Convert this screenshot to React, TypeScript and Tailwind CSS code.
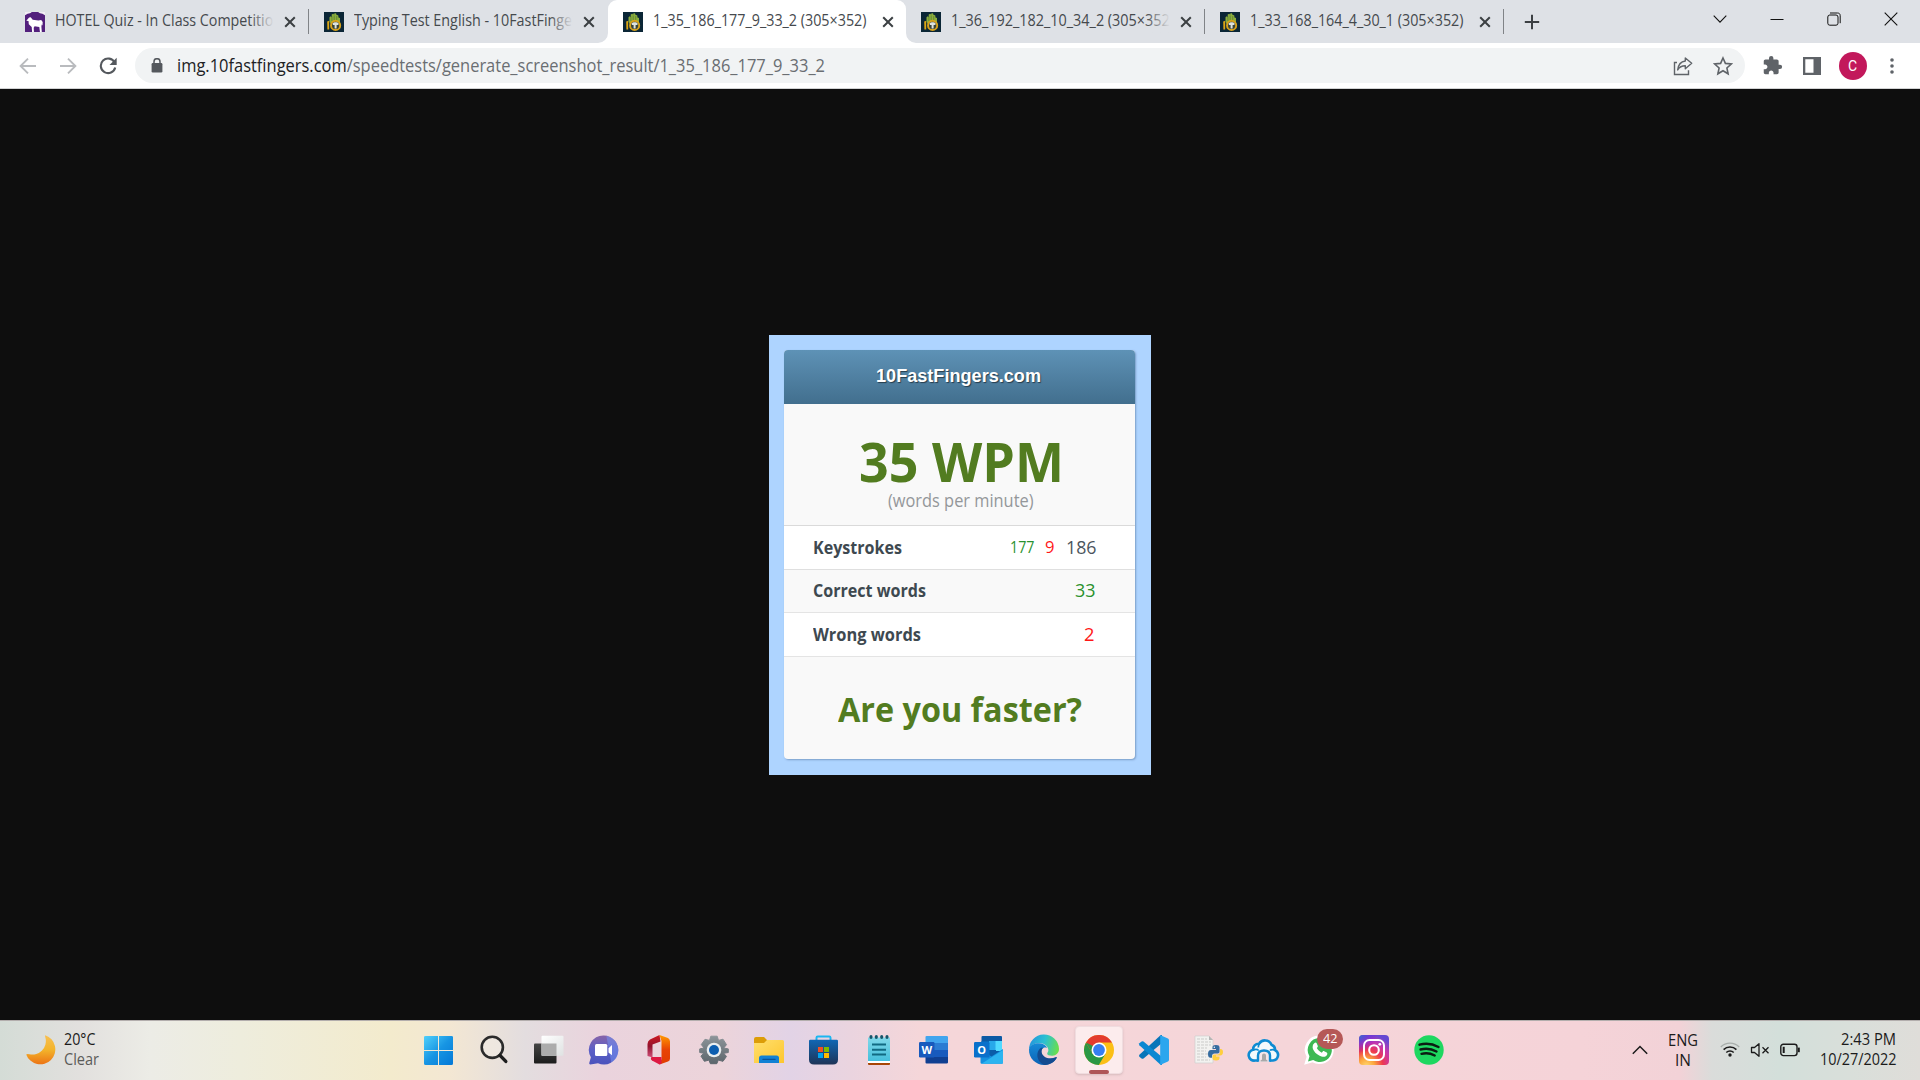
import React, { useLayoutEffect, useRef } from "react";

const UI = "font-['Open_Sans','Noto_Sans',sans-serif]";

/* One line of text squeezed or stretched horizontally to a fixed width. */
function Fit({ w, className = "", children }: { w: number; className?: string; children: React.ReactNode }) {
  const inner = useRef<HTMLSpanElement>(null);
  useLayoutEffect(() => {
    const el = inner.current;
    if (el && el.offsetWidth) el.style.transform = `scaleX(${w / el.getBoundingClientRect().width})`;
  }, []);
  return (
    <span className={`block shrink-0 whitespace-nowrap leading-none ${className}`} style={{ width: w }}>
      <span ref={inner} className="inline-block origin-left whitespace-pre">{children}</span>
    </span>
  );
}

function HandFavicon() {
  return (
    <svg viewBox="0 0 20 20" className="h-5 w-5 shrink-0">
      <rect width="20" height="20" fill="#0b2636" />
      <path d="M5.500 10V5.200l1.200-1 1 1V2.600l1.600-.8.900 1V1.500l1.800-.3.600 1.800 1.600.2.300 2.200 1.500.6V11l-2 1H7z" fill="#8bae3c" />
      <path d="M7.900 4.500v4.500M10.200 3.500V8M12.700 4V8.500" stroke="#4e7030" strokeWidth=".6" />
      <path d="M3.200 9.500 5.200 8.800v8.800H3.400z" fill="#dba514" />
      <circle cx="11.600" cy="13.400" r="4.600" fill="#3a4438" stroke="#d8a21b" strokeWidth="1.900" />
      <path d="M8.500 11.600c1.400-1.800 4.900-1.800 6.200 0l-.4 1.300h-1.700v3.600h-2v-3.600H9z" fill="#dfe3de" />
    </svg>
  );
}

function HorseFavicon() {
  return (
    <svg viewBox="0 0 20 20" className="h-5 w-5 shrink-0">
      <rect width="20" height="20" fill="#f3eef6" />
      <path d="M0 3.200 2.600 1.800C4.500 1.600 5.600.9 6.800 0h6.400c1.200.9 2.300 1.600 4.200 1.800L20 3.200V20H0z" fill="#53207d" />
      <path d="M1.300 8.800 4.100 5.600l1.600-.4 2 2.500 5.700.7 2.800-.4 1.500 2-.2 3.500-.8-1-.3 2.300.5 6.200h-1.800l-.8-6-4.700-.8-.9 1.500.3 5.400H7.200l-.5-6-2.900-2.800L3.500 9z" fill="#fff" />
    </svg>
  );
}

function TabClose() {
  return (
    <svg viewBox="0 0 12 12" className="h-3 w-3 shrink-0">
      <path d="M1.200 1.200l9.600 9.600M10.800 1.200 1.200 10.800" stroke="#3c4043" strokeWidth="2" />
    </svg>
  );
}

function Tab({ title, w, horse, active, line, fade }: { title: string; w: number; horse?: boolean; active?: boolean; line?: boolean; fade?: boolean }) {
  return (
    <div className={`relative flex h-[43px] w-[298.750px] shrink-0 items-center pl-[15px] ${active ? "rounded-t-[9px] bg-white" : ""}`}>
      {active && (
        <>
          <svg viewBox="0 0 10 10" className="absolute bottom-0 -left-[10px] h-[10px] w-[10px]"><path d="M10 0v10H0A10 10 0 0 0 10 0" fill="#fff" /></svg>
          <svg viewBox="0 0 10 10" className="absolute -right-[10px] bottom-0 h-[10px] w-[10px]"><path d="M0 0v10h10A10 10 0 0 1 0 0" fill="#fff" /></svg>
        </>
      )}
      {horse ? <HorseFavicon /> : <HandFavicon />}
      <div className="relative ml-[10px] h-[22px] w-[219px] shrink-0 overflow-hidden">
        <Fit w={w} className="mt-[2px] text-[15.500px] text-[#45494d]">{title}</Fit>
        {fade && <div className="absolute top-0 right-0 h-full w-6 bg-gradient-to-r from-[#dee1e600] to-[#dee1e6]" />}
      </div>
      <div className="ml-[10px] flex shrink-0"><TabClose /></div>
      {line && <div className="ml-[12px] h-[25px] w-px shrink-0 bg-[#808387]" />}
    </div>
  );
}

function TabStrip() {
  return (
    <div className="flex h-[43px] bg-[#dee1e6] pl-[10px]">
      <Tab horse title="HOTEL Quiz - In Class Competition" w={227} fade line />
      <Tab title="Typing Test English - 10FastFinger" w={224} fade />
      <Tab active title="1_35_186_177_9_33_2 (305×352)" w={213.500} />
      <Tab title="1_36_192_182_10_34_2 (305×352)" w={223} fade line />
      <Tab title="1_33_168_164_4_30_1 (305×352)" w={213.500} line />
      <div className="flex h-full flex-1 items-center">
        <svg viewBox="0 0 16 16" className="ml-[20.500px] h-4 w-4"><path d="M8 .8v14.400M.8 8h14.400" stroke="#3c4043" strokeWidth="2" /></svg>
        <div className="mr-[22px] mb-[6px] ml-auto flex items-center gap-[43px] text-[#111]">
          <svg viewBox="0 0 14 14" className="h-[14px] w-[14px]"><path d="M.7 3.700 7 10.200l6.300-6.500" fill="none" stroke="currentColor" strokeWidth="1.100" /></svg>
          <svg viewBox="0 0 14 14" className="h-[14px] w-[14px]"><path d="M.5 7.500h13" stroke="currentColor" /></svg>
          <svg viewBox="0 0 14 14" className="h-[14px] w-[14px]" fill="none" stroke="currentColor"><rect x=".8" y="3" width="10.200" height="10.200" rx="2" /><path d="M3 1h7.500c1.700 0 2.700 1 2.700 2.700v7.500" /></svg>
          <svg viewBox="0 0 14 14" className="h-[14px] w-[14px]"><path d="M.7.7l12.600 12.600M13.300.7.7 13.300" stroke="currentColor" strokeWidth="1.100" /></svg>
        </div>
      </div>
    </div>
  );
}

function Toolbar() {
  return (
    <div className="flex h-[46px] items-center border-b border-[#d2d3d4] bg-white pl-[19px]">
      <svg viewBox="0 0 18 18" className="h-[18px] w-[18px]"><path d="M17 9H2M9 1.600 1.600 9 9 16.400" fill="none" stroke="#b9bbbe" strokeWidth="1.900" /></svg>
      <svg viewBox="0 0 18 18" className="ml-[22px] h-[18px] w-[18px]"><path d="M1 9h15M9 1.600 16.400 9 9 16.400" fill="none" stroke="#b9bbbe" strokeWidth="1.900" /></svg>
      <svg viewBox="0 0 18 18" className="ml-[21.500px] h-[18px] w-[18px]"><path d="M15.600 5.500A7.300 7.300 0 1 0 16.200 10.500" fill="none" stroke="#54585d" strokeWidth="2.100" /><path d="M17.700.8v7.200h-7.200z" fill="#54585d" /></svg>
      <div className="ml-[18.500px] flex h-[35px] w-[1609.500px] items-center rounded-full bg-[#f1f3f4]">
        <svg viewBox="0 0 12 15" className="ml-[16px] h-[15px] w-3"><rect x=".6" y="5" width="10.800" height="9.400" rx="1.200" fill="#54585d" /><path d="M3 5.500V3.700a3 3 0 0 1 6 0v1.800" fill="none" stroke="#54585d" strokeWidth="1.500" /></svg>
        <Fit w={648} className="ml-[13.500px] text-[17.500px] text-[#6a6e72]"><span className="text-[#202124]">img.10fastfingers.com</span>/speedtests/generate_screenshot_result/1_35_186_177_9_33_2</Fit>
        <svg viewBox="0 0 20 20" className="ml-auto h-5 w-5" fill="none" stroke="#5f6368" strokeWidth="1.400"><path d="M4 6.500H1.500v12h14v-4.200" /><path d="M12.300 2l6.400 5.300-6.400 5.400V9.800c-3.500 0-6 1.400-7.600 4.100.5-4.500 3-8.300 7.600-8.900z" strokeLinejoin="round" /></svg>
        <svg viewBox="0 0 20 20" className="mr-[12px] ml-5 h-5 w-5"><path d="M10 2l2.400 5.400 5.900.6-4.400 4 1.200 5.800L10 14.800l-5.100 3L6.100 12 1.700 8l5.900-.6z" fill="none" stroke="#5f6368" strokeWidth="1.600" /></svg>
      </div>
      <svg viewBox="0 0 24 24" className="ml-[17px] h-[21px] w-[21px]"><path d="M20.500 11H19V7c0-1.100-.9-2-2-2h-4V3.500a2.500 2.500 0 0 0-5 0V5H4c-1.100 0-1.990.9-1.990 2v3.800H3.500c1.490 0 2.700 1.210 2.700 2.700s-1.210 2.700-2.700 2.700H2V20c0 1.100.9 2 2 2h3.800v-1.500c0-1.490 1.210-2.700 2.700-2.700 1.490 0 2.700 1.210 2.700 2.700V22H17c1.100 0 2-.9 2-2v-4h1.500a2.500 2.500 0 0 0 0-5z" fill="#5f6368" /></svg>
      <svg viewBox="0 0 18 18" className="ml-[20px] h-[18px] w-[18px]"><path d="M0 0h18v18H0zM2.300 2.300v13.400h8.200V2.300z" fill="#5f6368" fillRule="evenodd" /></svg>
      <div className="ml-[18px] flex h-7 w-7 items-center justify-center rounded-full bg-[#c2185b] font-['Roboto',sans-serif] text-[14px] leading-none text-white">C</div>
      <svg viewBox="0 0 4 16" className="ml-[23px] h-4 w-1" fill="#5f6368"><circle cx="2" cy="2" r="1.800" /><circle cx="2" cy="8" r="1.800" /><circle cx="2" cy="14" r="1.800" /></svg>
    </div>
  );
}

function ResultCard() {
  return (
    <div className={`flex h-[440px] w-[382px] flex-col bg-[#aed4ff] pt-[15px] pl-[15px] ${UI}`}>
      <div className="flex h-[409px] w-[351px] flex-col overflow-hidden rounded-[4px] bg-[#f9f9f9] shadow-[1px_1px_2px_rgba(60,90,130,0.45)]">
        <div className="h-[54px] bg-gradient-to-b from-[#5e92b6] to-[#426f8e] pt-[16.500px] pl-[92px]">
          <Fit w={165} className="font-['Liberation_Sans',sans-serif] text-[18.500px] font-bold text-white [text-shadow:1px_1px_1px_#263c4c]">10FastFingers.com</Fit>
        </div>
        <div className="h-[122px] border-b border-[#dadada] pt-[30px]">
          <Fit w={205} className="ml-[75px] text-[54.500px] font-bold text-[#527c20]">35 WPM</Fit>
          <Fit w={145.500} className="mt-[3.500px] ml-[104px] text-[17.500px] text-[#94979a]">(words per minute)</Fit>
        </div>
        <div className="flex h-[44px] border-b border-[#dfdfdf] bg-white">
          <Fit w={89} className="mt-[12.500px] ml-[28.500px] text-[17px] font-bold text-[#3e4950]">Keystrokes</Fit>
          <Fit w={24.500} className="mt-[13.500px] ml-[108px] text-[15.500px] text-[#2a912e]">177</Fit>
          <Fit w={9.500} className="mt-[13.500px] ml-[11px] text-[15.500px] text-[#ff1717]">9</Fit>
          <Fit w={30.500} className="mt-[11.500px] ml-[11px] text-[18px] text-[#4b555c]">186</Fit>
        </div>
        <div className="flex h-[43px] border-b border-[#e4e4e4]">
          <Fit w={113} className="mt-[12px] ml-[28.500px] text-[17px] font-bold text-[#3e4950]">Correct words</Fit>
          <Fit w={20.500} className="mt-[11px] ml-[149px] text-[18.500px] text-[#2a912e]">33</Fit>
        </div>
        <div className="flex h-[44px] border-b border-[#e4e4e4] bg-white">
          <Fit w={108} className="mt-[13px] ml-[28.500px] text-[17px] font-bold text-[#3e4950]">Wrong words</Fit>
          <Fit w={10.500} className="mt-[12px] ml-[163.500px] text-[18.500px] text-[#ff1717]">2</Fit>
        </div>
        <Fit w={244} className="mt-[35px] ml-[54px] text-[34px] font-bold text-[#527c20]">Are you faster?</Fit>
      </div>
    </div>
  );
}

function G({ id, c, v }: { id: string; c: string[]; v?: boolean }) {
  return (
    <linearGradient id={id} x1="0" y1="0" x2={v ? "0" : "1"} y2="1">
      {c.map((s, i) => <stop key={i} offset={i / (c.length - 1)} stopColor={s} />)}
    </linearGradient>
  );
}

function Icon({ children }: { children: React.ReactNode }) {
  return <div className="flex w-[55px] shrink-0 items-center justify-center"><svg viewBox="0 0 30 30" className="h-[30px] w-[30px] overflow-visible">{children}</svg></div>;
}

function Dock() {
  return (
    <div className="flex h-[58px] items-center">
      <Icon>
        <G id="win" c={["#4fd0fb", "#1795e3", "#0478d6"]} />
        <path d="M0 2Q0 1 1.500 1H14v14H0zM15 1H27.500Q29 1 29 2v13H15zM0 16h14v14H1.500Q0 30 0 28.500zM15 16h14v12.500q0 1.500-1.500 1.500H15z" fill="url(#win)" />
      </Icon>
      <Icon>
        <circle cx="13.300" cy="12.300" r="10.600" fill="#f2ece5" fillOpacity=".55" stroke="#2b2b2b" strokeWidth="2.600" />
        <path d="M21 20.300 26.800 26.400" stroke="#1e1e1e" strokeWidth="3.400" strokeLinecap="round" />
      </Icon>
      <Icon>
        <G id="tv" c={["#454545", "#1c1c1c"]} v /><G id="tw" c={["#ffffff", "#dfe2e2"]} />
        <rect x="0" y="8.500" width="22.500" height="20" rx="1" fill="url(#tv)" />
        <rect x="7.500" y=".8" width="22" height="20" rx="1" fill="url(#tw)" />
        <rect x="7.500" y="8.500" width="15" height="12.300" fill="#acacac" />
      </Icon>
      <Icon>
        <G id="ch2" c={["#8764a8", "#5b5fc7", "#4b53bc"]} v />
        <path d="M14.800.5a14.500 14.500 0 1 1-5.800 27.800L1.300 29.400q-1.500 0-1-1.600l1.600-5.500A14.500 14.500 0 0 1 14.800.5z" fill="url(#ch2)" />
        <path d="M17.300.8a14.500 14.500 0 0 1 12 14.700 14 14 0 0 1-7 12z" fill="#7492f0" fillOpacity=".55" />
        <rect x="6" y="9" width="12.300" height="12" rx="1.500" fill="#fff" />
        <path d="M19.500 13.300l3.500-3.200v10.200l-3.500-2.800z" fill="#fff" />
      </Icon>
      <Icon>
        <G id="of" c={["#d01820", "#92132e", "#d0507b"]} v /><G id="of2" c={["#ff9a00", "#e84305", "#e03c00"]} v />
        <path d="M15.500 0 6 4.500Q3.500 6 3.500 9v12l5 1.500V9.500L16.500 6.500z" fill="url(#of)" />
        <path d="M15.500 0 24 3Q26 4 26 6.500v17q0 2.300-2 3.100L15.500 29.500l2-5.500V6z" fill="url(#of2)" />
        <path d="M7.500 22h10v6.500L15.500 29.500 8 25.500Q6 24 7.500 22z" fill="#dd1943" />
      </Icon>
      <Icon>
        <G id="ge" c={["#8c9499", "#5c666c"]} v />
        <path d="M11.800 1.200h6.400l1.300 4.200 4.500-1.200L27.500 9.700 24.700 13l4.600.9v3.600l-4.600.8 2.800 3.100-3.500 4.900-4.700-1.200-1.500 3.600h-6.400l-1.500-3.600-4.500 1.200L1.900 21l3-2.700-4.200-.8v-3.600l4.400-.9L2.300 9.600 6 4.300l4.500 1.100z" fill="url(#ge)" stroke="url(#ge)" strokeLinejoin="round" />
        <circle cx="15" cy="15" r="7.300" fill="#e9eef0" /><circle cx="15" cy="15" r="5" fill="#0b5eb0" />
      </Icon>
      <Icon>
        <G id="fo" c={["#ffdf6e", "#fdc62e"]} />
        <path d="M0 4q0-2 2-2h8l3 3h7v5H0z" fill="#dc9d08" />
        <path d="M0 8h10l3-3h15.500Q30 5 30 6.500V28H0z" fill="url(#fo)" />
        <path d="M5 28v-5q0-2.500 2.500-2.500h15q2.500 0 2.500 2.500v5z" fill="#1181d4" /><path d="M9 24.400h12" stroke="#07539b" strokeWidth="1.400" strokeLinecap="round" />
      </Icon>
      <Icon>
        <G id="st" c={["#1167b4", "#1e3457"]} v />
        <path d="M7.500 7V2.800q0-1.300 1.300-1.300h11.400q1.300 0 1.300 1.300V7" fill="none" stroke="#1bb6f1" strokeWidth="2" />
        <path d="M0 6q0-1.200 1.200-1.200h26.600Q29 4.800 29 6v18.500q0 5-5 5H5q-5 0-5-5z" fill="url(#st)" />
        <path d="M9 12h5v5H9z" fill="#f25022" /><path d="M15 12h5v5h-5z" fill="#7fba00" /><path d="M9 18h5v5H9z" fill="#00a4ef" /><path d="M15 18h5v5h-5z" fill="#ffb900" />
      </Icon>
      <Icon>
        <G id="np" c={["#80d8e9", "#45bfdc"]} v />
        <rect x="4" y="26" width="22" height="4" rx="1" fill="#a84505" /><rect x="4" y="25" width="22" height="3" fill="#fff" />
        <path d="M4 2.500h22V26H4z" fill="url(#np)" />
        <path d="M8 9.500h14M8 14.700h14M8 19.500h14" stroke="#116a82" strokeWidth="2" />
        <g fill="#14566a"><ellipse cx="7" cy="2" rx="1.600" ry="2" /><ellipse cx="12.300" cy="2" rx="1.600" ry="2" /><ellipse cx="17.700" cy="2" rx="1.600" ry="2" /><ellipse cx="23" cy="2" rx="1.600" ry="2" /></g>
      </Icon>
      <Icon>
        <path d="M6.500 2q0-1 1-1h20Q29 1 29 2v6H6.500z" fill="#41a5ee" /><path d="M6.500 8H29v7H6.500z" fill="#2b7cd3" /><path d="M6.500 15H29v7H6.500z" fill="#185abd" /><path d="M6.500 22H29v5.500q0 1-1.500 1h-20q-1 0-1-1z" fill="#103f91" />
        <rect x="0" y="7" width="15.500" height="15.500" rx="1.200" fill="#185abd" />
        <text x="7.700" y="18.600" textAnchor="middle" fontSize="11" fontWeight="700" fill="#fff" className={UI}>W</text>
      </Icon>
      <Icon>
        <path d="M7.500 2q0-1 1-1H27q1 0 1 1v20H7.500z" fill="#0c5aa5" /><path d="M7.500 6h8v16h-8z" fill="#0a67b8" /><path d="M15 6h7v16h-7z" fill="#28a8ea" /><path d="M21.500 6H28v10h-6.500z" fill="#50d9ff" />
        <path d="M15 15h7v7h-7z" fill="#0a5ca8" />
        <path d="M6.500 15l11 6.500L29 14v13.500q0 1.200-1.200 1.200H7.700q-1.200 0-1.200-1.200z" fill="#1490df" /><path d="M7.500 28.700 29 15v12.500q0 1.200-1.200 1.200z" fill="#2cb4f0" />
        <rect y="7" width="15.500" height="15.500" rx="1.200" fill="#0a70cb" />
        <text x="7.700" y="18.600" textAnchor="middle" fontSize="11" fontWeight="700" fill="#fff" className={UI}>O</text>
      </Icon>
      <Icon>
        <G id="e1" c={["#168bd8", "#0c62b5"]} v />
        <linearGradient id="e2" x1="0" y1=".3" x2="1" y2=".5"><stop stopColor="#2494dd" /><stop offset=".5" stopColor="#2cc0d2" /><stop offset="1" stopColor="#68de4e" /></linearGradient>
        <path d="M0 15A15 15 0 0 1 30 14c0 4-3 6.500-6.500 6.700-3 .1-5.500-.7-5.300-2.200.2-1 1.200-1.400 1.200-3.400C19 11 15 8 10.500 8 5 8 1 11 0 15z" fill="url(#e2)" />
        <path d="M0 14.500C1 9.500 6 8 10.500 8.200c4.500.2 7 3 7.500 4.800-3.500-1.500-6 1.500-5.800 4.300.4 5 5.800 8.200 11.300 7 2-.4 3.300-1 4.300-1.600C25.500 27 20 30 15 30 7 30-.5 23 0 14.500z" fill="url(#e1)" />
        <path d="M13 12.500C6.500 15 6.500 26.500 15.500 30c5.500 0 10-3 12.300-7.200.3-.8-.2-1-.8-.7-6.500 3-13.500.2-14.300-4.600-.3-2 .2-3.500 1.200-4.500z" fill="#134b90" />
      </Icon>
      <div className="flex w-[55px] shrink-0 justify-center">
        <div className="flex h-12 w-12 flex-col items-center rounded-[4px] border border-[#f0dcdf] bg-[#fceced] pt-2 shadow-sm">
          <svg viewBox="0 0 30 30" className="h-[30px] w-[30px] shrink-0">
            <circle cx="15" cy="15" r="15" fill="#fbbf16" />
            <path d="M2 7.500A15 15 0 0 0 14.800 30L21.500 18.700 15 15 8.500 18.700z" fill="#2a9744" />
            <path d="M2 7.500A15 15 0 0 1 28 7.500H15L8.500 18.700z" fill="#e33b2e" /><path d="M2 7.500 8.500 18.700 11 12z" fill="#2a9744" />
            <circle cx="15" cy="15" r="7.500" fill="#fff" /><circle cx="15" cy="15" r="5.900" fill="#377ef1" />
          </svg>
          <div className="mt-[5px] h-1 w-5 shrink-0 rounded-full bg-[#af5658]" />
        </div>
      </div>
      <Icon>
        <path d="M21.500.3 23 0v8L4.500 23.500q-1 .6-1.900 0L.4 21.700q-.8-1 0-2z" fill="#0875b9" />
        <path d="M21.500 29.700 23 30v-8L4.500 6.500q-1-.6-1.900 0L.4 8.300q-.8 1 0 2z" fill="#0a88d2" />
        <path d="M21.500.3 29 3.500q1 .5 1 1.700v19.600q0 1.200-1 1.700l-7.500 3.200q-.8.200-.3-1.200V1.500q-.5-1 .3-1.200z" fill="#2ba6ee" />
      </Icon>
      <Icon>
        <path d="M1 1h14l4 4v23H1z" fill="#f2f2f0" stroke="#d0d0cf" strokeWidth=".7" /><path d="M15 1v4h4z" fill="#b5b5b5" />
        <path d="M3 4h10M3 7h14M3 10h14M3 13h10M3 16h9M3 19h11M3 22h9M3 25h13" stroke="#cbcbc9" strokeWidth="1" strokeDasharray="3 1" />
        <path d="M22 10c-3 0-3.500 1-3.500 2.500V14H22v1h-5c-2 0-3 1.200-3 4s1 3.800 2.500 3.800H18V21c0-1.500 1-2.500 2.500-2.500h3c1.500 0 2-.8 2-2v-4c0-1.700-1-2.500-3.500-2.500z" fill="#356c9f" />
        <path d="M22 25.500c3 0 3.500-1 3.500-2.500v-1.500H22v-1h4c2 0 3-1.200 3-3.500s-1-3-2.500-3H26v3c0 1.500-1 2.500-2.500 2.500h-3c-1.500 0-2 .8-2 2V23c0 1.700 1 2.500 3.500 2.500z" fill="#ffcf3e" />
        <circle cx="20.300" cy="12.200" r=".7" fill="#fff" />
      </Icon>
      <Icon>
        <path d="M6 25.500A5.300 5.300 0 0 1 4.200 14.800 5.500 5.500 0 0 1 10 8.800a7 7 0 0 1 12.500 1 5.300 5.300 0 0 1 3.500 5.300A5.500 5.500 0 0 1 24 25.500z" fill="#f3fafc" stroke="#0e8bd2" strokeWidth="2.600" strokeLinejoin="round" />
        <path d="M4.200 15q3.500-1.500 5.500.5M10.500 9q-1.500 1.500-1 3.500M25.500 15q-3-1-4.500.5" fill="none" stroke="#0e8bd2" strokeWidth="1.700" />
        <path d="M9 27V20.500q0-5 6-5t6 5V27z" fill="#f5e6ea" /><path d="M9 26.800V20.500q0-5 6-5t6 5v6.300" fill="none" stroke="#0e8bd2" strokeWidth="2.400" />
        <path d="M11.500 26.500v-1l1.500-1v-4q0-2 2-2t2 2v4l1.500 1v1z" fill="#a9a9a9" />
      </Icon>
      <div className="relative flex shrink-0">
        <Icon>
          <path d="M15.500.5a14.300 14.300 0 1 1-7 26.800L.2 29.800l2.400-8A14.300 14.300 0 0 1 15.500.5z" fill="#fff" />
          <path d="M15.500 3a12 12 0 1 1-6.300 22L4 26.500 5.500 21.300A12 12 0 0 1 15.500 3z" fill="#3db954" />
          <path d="M10.500 8q1.500-1 2.300.5l1 2.500q.3.800-1 2.100c1.200 2.200 3 3.800 5 4.600 1.200-1.700 1.500-1.900 2.400-1.400l2.500 1.200q1 .5.500 2c-.8 2.200-3.200 2.800-5.700 2-5-1.600-8.500-5.500-8.900-9.200Q8.400 9.500 10.500 8z" fill="#fff" />
        </Icon>
        <div className="absolute -top-[6px] left-[25.500px] flex h-5 w-[26px] items-center justify-center rounded-full bg-[#b55857]">
          <Fit w={14.500} className="text-[13.500px] text-white">42</Fit>
        </div>
      </div>
      <Icon>
        <radialGradient id="ig" cx=".25" cy="1.050" r="1.100"><stop stopColor="#ffdb73" /><stop offset=".25" stopColor="#fca63c" /><stop offset=".5" stopColor="#ed394f" /><stop offset=".75" stopColor="#c837ab" /><stop offset="1" stopColor="#6549d2" /></radialGradient>
        <radialGradient id="ig2" cx="0" cy="0" r=".6"><stop stopColor="#3771c8" /><stop offset="1" stopColor="#6600ff" stopOpacity="0" /></radialGradient>
        <rect width="30" height="30" rx="4" fill="url(#ig)" /><rect width="30" height="30" rx="4" fill="url(#ig2)" />
        <rect x="5" y="5" width="20" height="20" rx="5.500" fill="none" stroke="#fff" strokeWidth="2" /><circle cx="15" cy="15" r="4.800" fill="none" stroke="#fff" strokeWidth="2.100" /><circle cx="20.800" cy="9.300" r="1.400" fill="#fff" />
      </Icon>
      <Icon>
        <circle cx="15" cy="15" r="14.700" fill="#1ed760" />
        <path d="M5.500 9.700q10-2.700 19 2.300M6.500 14.500q8.500-2.300 16 2M7.500 18.800q7-1.800 13.200 1.700" fill="none" stroke="#0b1c12" strokeWidth="2.400" strokeLinecap="round" />
      </Icon>
    </div>
  );
}

function Taskbar() {
  return (
    <div className={`flex h-[60px] border-t border-[#b3aead] bg-[linear-gradient(90deg,#d4dcd6_0px,#e2e0de_80px,#ecece6_150px,#eeeddd_240px,#f3ebcd_390px,#f3e7d3_450px,#e3dddf_525px,#ead3dd_600px,#ecd4da_720px,#e2d3e6_790px,#ead4df_850px,#f5d6d9_920px,#f5d5d9_1300px,#f5d3d8_1580px,#f2d2d7_1680px,#dadcda_1712px,#d3dfda_1780px,#d9dfda_1850px,#dfddd9_1920px)] ${UI}`}>
      <div className="flex w-[411.500px] pt-[13px] pl-[26px]">
        <svg viewBox="0 0 30 30" className="mt-px h-[30px] w-[30px]">
          <G id="moon" c={["#f8c052", "#f3b42b", "#ec7415"]} v />
          <path d="M19.300.2A15 15 0 1 1 .2 19.400Q1 18.700 3.500 19.300A13.500 13.500 0 0 0 19.500 3Q18.700.8 19.300.2z" fill="url(#moon)" />
        </svg>
        <div className="ml-2">
          <Fit w={31.500} className="mt-[-2.500px] text-[15.500px] text-[#1b1b1b]">20°C</Fit>
          <Fit w={35} className="mt-[5px] text-[15.500px] text-[#5b5b59]">Clear</Fit>
        </div>
      </div>
      <Dock />
      <div className="ml-auto flex text-[15.500px] text-[#1b1b1b]">
        <svg viewBox="0 0 16 10" className="mt-[24px] h-[10px] w-4"><path d="M.8 8.800 8 1.500l7.200 7.300" fill="none" stroke="currentColor" strokeWidth="1.500" /></svg>
        <div className="ml-[20px] flex w-[30px] flex-col items-center pt-[12px]">
          <Fit w={30}>ENG</Fit>
          <Fit w={16} className="mt-[4.500px]">IN</Fit>
        </div>
        <div className="ml-[22px] flex items-start pt-[20px]">
          <svg viewBox="0 0 20 16" className="h-4 w-5" fill="none"><path d="M.8 6a13 13 0 0 1 18.400 0" stroke="#a8aeab" strokeWidth="1.300" /><path d="M3.600 8.600a9 9 0 0 1 12.800 0M6.300 11.500a5.300 5.300 0 0 1 7.400 0" stroke="currentColor" strokeWidth="1.500" /><circle cx="10" cy="14" r="1.700" fill="currentColor" /></svg>
          <svg viewBox="0 0 20 16" className="mt-px ml-[9.500px] h-4 w-5" fill="none" stroke="currentColor" strokeWidth="1.300"><path d="M1.500 5.500h3L9 1.700v12.600L4.500 10.500h-3z" strokeLinejoin="round" /><path d="M12.500 5.200l6 6M18.500 5.200l-6 6" /></svg>
          <svg viewBox="0 0 20 14" className="mt-[2px] ml-[10.500px] h-[14px] w-5" fill="none" stroke="currentColor" strokeWidth="1.400"><rect x=".8" y="1.200" width="16.200" height="11.400" rx="2.500" /><path d="M3.700 3.800v6.200" strokeWidth="2" /><path d="M18.800 4.600v4.600" strokeWidth="2" /></svg>
        </div>
        <div className="mr-[24px] ml-[19px] flex w-[77px] flex-col items-end pt-[11px]">
          <Fit w={55}>2:43 PM</Fit>
          <Fit w={76.500} className="mt-[4.500px]">10/27/2022</Fit>
        </div>
      </div>
    </div>
  );
}

export default function App() {
  return (
    <div className={`flex h-[1080px] w-[1920px] flex-col overflow-hidden bg-[#0e0e0e] ${UI}`}>
      <TabStrip />
      <Toolbar />
      <main className="flex flex-1 justify-center pt-[246px]"><ResultCard /></main>
      <Taskbar />
    </div>
  );
}
